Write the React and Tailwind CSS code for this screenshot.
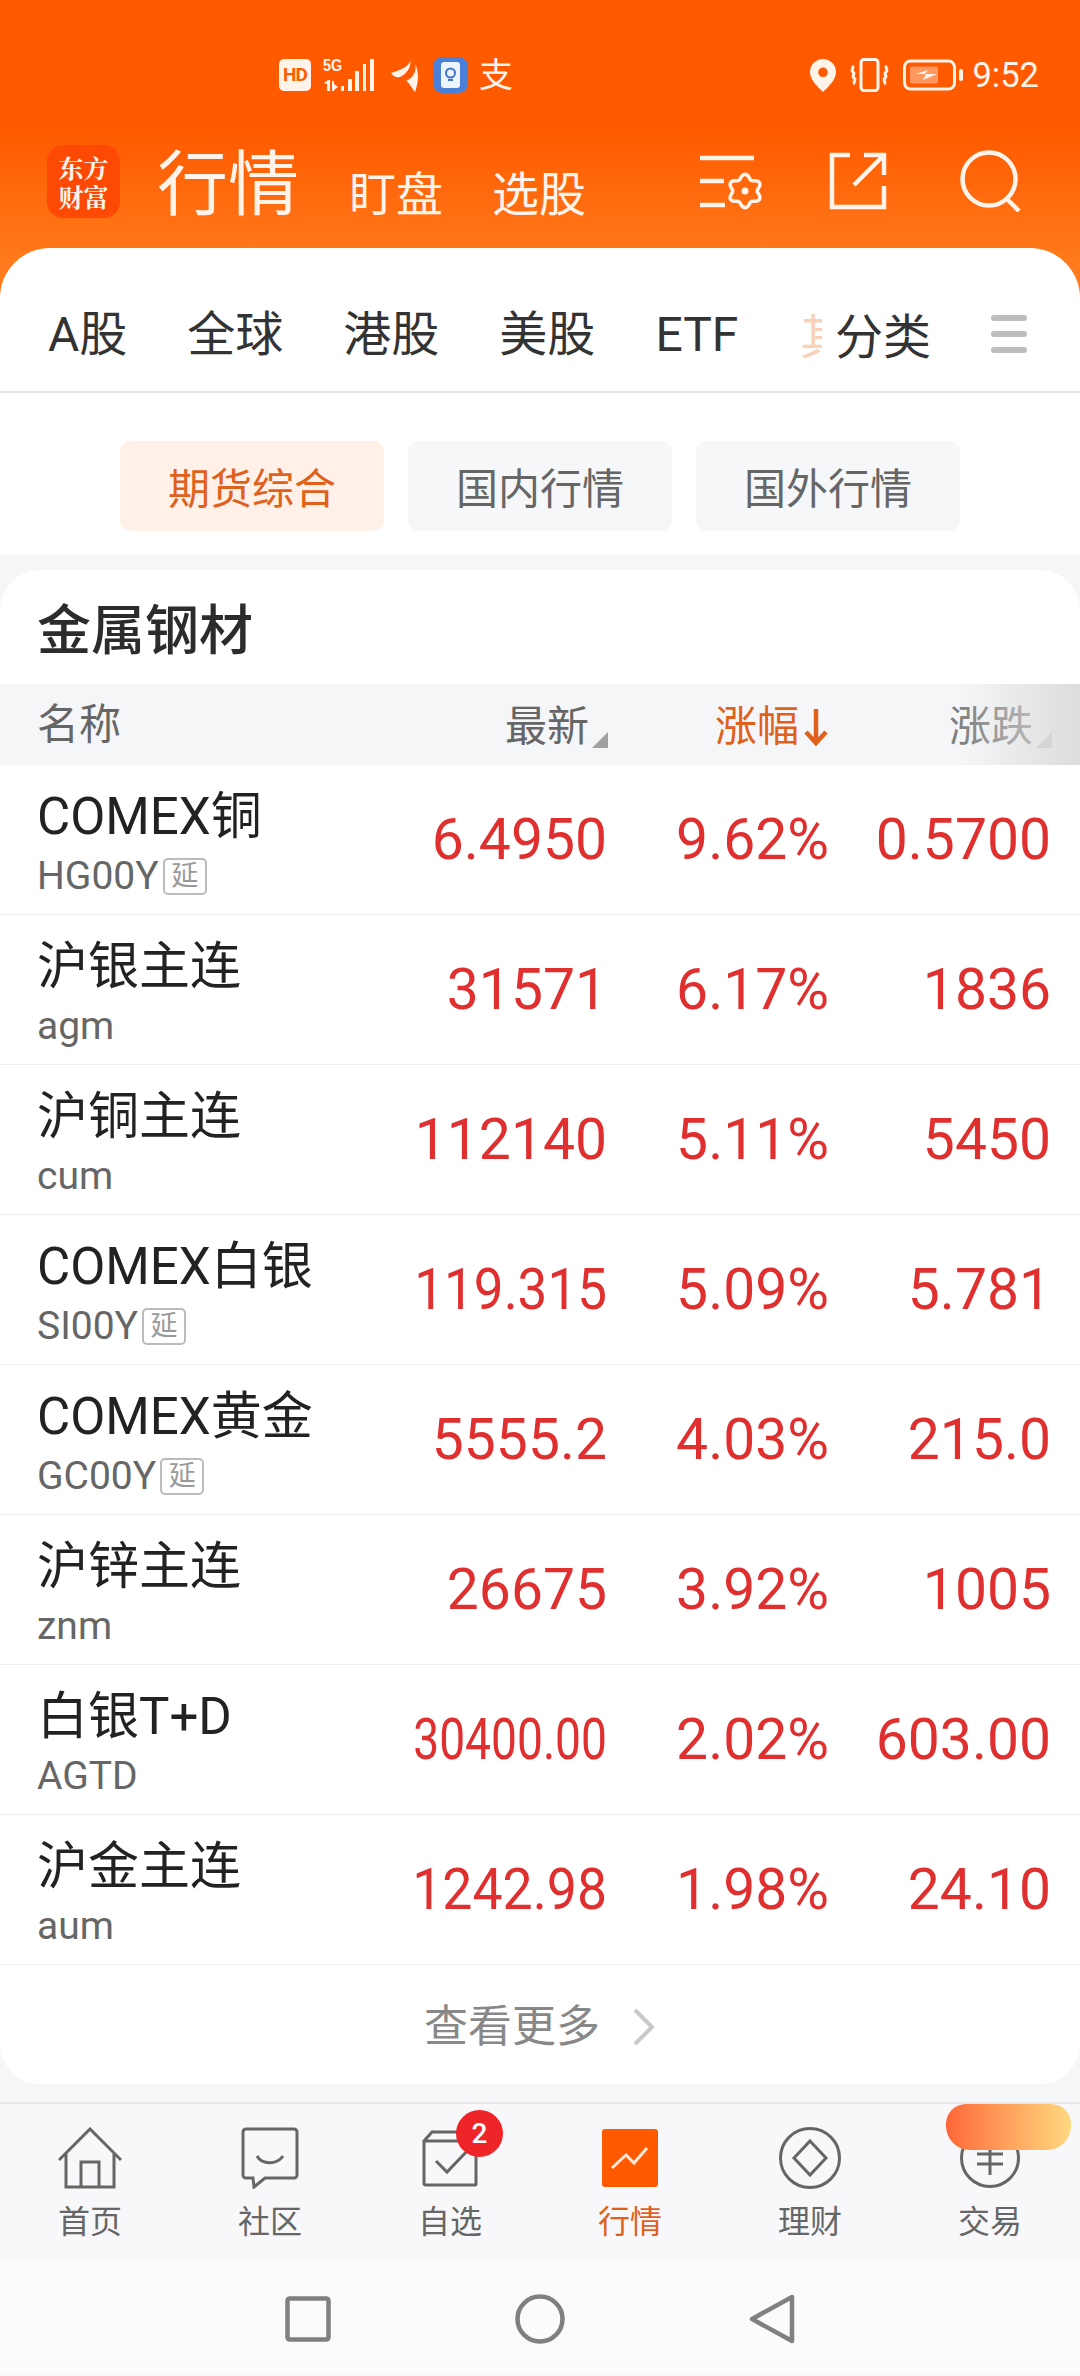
const FONT = "font-['Roboto','Noto_Sans_CJK_SC',sans-serif]";

const tabs = ['全球', '港股', '美股', 'ETF'];

const subTabs = [
  { label: '期货综合', active: true },
  { label: '国内行情' },
  { label: '国外行情' },
];

const rows = [
  { name: 'COMEX铜', code: 'HG00Y', delay: true, last: '6.4950', pct: '9.62%', chg: '0.5700' },
  { name: '沪银主连', code: 'agm', last: '31571', pct: '6.17%', chg: '1836' },
  { name: '沪铜主连', code: 'cum', last: '112140', pct: '5.11%', chg: '5450' },
  { name: 'COMEX白银', code: 'SI00Y', delay: true, last: '119.315', pct: '5.09%', chg: '5.781', fit: 'scale-x-[0.93] origin-right' },
  { name: 'COMEX黄金', code: 'GC00Y', delay: true, last: '5555.2', pct: '4.03%', chg: '215.0' },
  { name: '沪锌主连', code: 'znm', last: '26675', pct: '3.92%', chg: '1005' },
  { name: '白银T+D', code: 'AGTD', last: '30400.00', pct: '2.02%', chg: '603.00', fit: 'scale-x-[0.81] origin-right' },
  { name: '沪金主连', code: 'aum', last: '1242.98', pct: '1.98%', chg: '24.10', fit: 'scale-x-[0.94] origin-right' },
];

// six-lobed outline of the little gear in the title bar
const gearPath = Array.from({ length: 72 }, (_, i) => {
  const a = (i / 72) * Math.PI * 2;
  const r = 14.5 + 2.2 * Math.cos(6 * a);
  return `${i === 0 ? 'M' : 'L'}${(45 + r * Math.sin(a)).toFixed(1)} ${(39 - r * Math.cos(a)).toFixed(1)}`;
}).join('') + 'z';

function StatusBar() {
  return (
    <div className="h-[136px] pl-[279px] pr-[41px] pt-[57px] flex justify-between items-start text-[#fff3ea]">
      <div className="flex items-center h-[36px]">
        <div className="w-[32px] h-[32px] rounded-[5px] bg-[#fff3ea] text-[#ff5a00] text-[19px] leading-[32px] font-bold text-center tracking-[-1px]">HD</div>
        <div className="relative w-[54px] h-[34px] ml-[12px]">
          <span className="absolute left-0 top-0 text-[16px] leading-[15px] font-bold font-['Liberation_Sans',sans-serif] scale-x-[0.9] origin-left">5G</span>
          <svg width="54" height="34" viewBox="0 0 54 34" fill="currentColor" className="absolute left-0 top-0">
            <path d="M1 25l4-3h2v11H4v-7zM9 23h2v3l4 3-4 3v1H9zM18 28h3v5h-3zM25 21h4v12h-4zM32 13h4v20h-4zM40 6h3v27h-3zM47 1h4v32h-4z" />
          </svg>
        </div>
        <svg width="28" height="34" viewBox="0 0 28 34" fill="currentColor" className="ml-[14px]">
          <path d="M19 1c1 5-5 9-13 12l-6 2c2 3 5 5 9 4 6-3 12-9 10-18z" />
          <path d="M24 6c2 7-2 14-9 17 3 1 5 6 9 11 3-8 5-19 0-28z" />
        </svg>
        <div className="w-[35px] h-[36px] ml-[14px] rounded-[9px] bg-[#4a80d8] flex items-center justify-center">
          <div className="w-[19px] h-[26px] rounded-[3px] bg-[#eef4fd] flex items-center justify-center">
            <svg width="13" height="16" viewBox="0 0 13 16" fill="none" stroke="#3f74c8" strokeWidth="2">
              <circle cx="6.5" cy="6" r="4.5" />
              <path d="M4 13h5" />
            </svg>
          </div>
        </div>
        <span className="ml-[11px] text-[34px] leading-[36px]">支</span>
      </div>
      <div className="flex items-center h-[36px]">
        <svg width="26" height="33" viewBox="0 0 26 33" fill="currentColor">
          <path fillRule="evenodd" d="M13 0c7 0 13 5.500 13 13 0 8-8 15-13 20C8 28 0 21 0 13 0 5.500 6 0 13 0zm0 8.500a4.800 4.800 0 1 0 0 9.600 4.800 4.800 0 0 0 0-9.600z" />
        </svg>
        <svg width="42" height="34" viewBox="0 0 42 34" fill="none" stroke="currentColor" strokeWidth="3" className="ml-[13px]">
          <rect x="12" y="1.500" width="17" height="31" rx="3" />
          <path d="M3 8c3 2-2 4 1 6s-2 4 1 6-2 4 1 6M38 8c-3 2 2 4-1 6s2 4-1 6 2 4-1 6" />
        </svg>
        <svg width="60" height="32" viewBox="0 0 60 32" fill="none" className="ml-[12px]">
          <rect x="1.500" y="2" width="50" height="28" rx="6" stroke="currentColor" strokeWidth="3" />
          <rect x="7" y="7.500" width="28" height="17" rx="2" fill="currentColor" opacity="0.400" />
          <path d="M12 15l13-4-3 4h12l-14 6 3-6z" fill="currentColor" />
          <rect x="56" y="10" width="4" height="12" rx="2" fill="currentColor" />
        </svg>
        <span className="ml-[9px] text-[34.500px] leading-[36px]">9:52</span>
      </div>
    </div>
  );
}

function TitleBar() {
  return (
    <div className="h-[112px] pl-[47px] pr-[58px] flex items-start text-[#fff3ea]">
      <div className="w-[73px] h-[73px] mt-[9px] rounded-[16px] bg-[#fc4a04] flex flex-col items-center justify-center font-['Noto_Serif_CJK_SC','Noto_Sans_CJK_SC',serif] font-bold text-[25px] leading-[29px]">
        <span>东方</span>
        <span>财富</span>
      </div>
      <span className="ml-[37px] mt-[3px] text-[71px] leading-[92px]">行情</span>
      <span className="ml-[50px] mt-[19px] text-[47px] leading-[80px]">盯盘</span>
      <span className="ml-[49px] mt-[19px] text-[47px] leading-[80px]">选股</span>
      <div className="ml-auto mt-[16px] flex items-start">
        <svg width="64" height="58" viewBox="0 0 64 58" fill="none" stroke="currentColor" strokeWidth="4.500">
          <path d="M0 6h54M0 29h24M0 53h25" />
          <path d={gearPath} strokeWidth="3.500" />
          <circle cx="45" cy="39" r="3.500" fill="currentColor" stroke="none" />
        </svg>
        <svg width="58" height="58" viewBox="0 0 58 58" fill="none" stroke="currentColor" strokeWidth="4.500" className="ml-[65px]">
          <path d="M21 3H3v52h52V34M35 3h20v20M55 3L25 33" />
        </svg>
        <svg width="62" height="62" viewBox="0 0 62 62" fill="none" stroke="currentColor" strokeWidth="4.500" className="ml-[73px] -mt-[2px]">
          <circle cx="29" cy="29" r="26.500" />
          <path d="M47 49l12 12" />
        </svg>
      </div>
    </div>
  );
}

function TabStrip() {
  return (
    <div className="h-[145px] pt-[30px] border-b-[2px] border-[#e6e6e6] flex items-center text-[48px] text-[#333] relative">
      <span className="ml-[48px]">A股</span>
      {tabs.map(t => (
        <span key={t} className="ml-[60px]">{t}</span>
      ))}
      <div className="absolute left-[800px] top-[54px] w-[22px] h-[64px] overflow-hidden text-[#f8c8a8] opacity-80">其</div>
      <span className="absolute left-[835px] top-[54px]">分类</span>
      <div className="absolute left-[991px] top-[67px] flex flex-col gap-[10px]">
        <div className="w-[36px] h-[6px] rounded-full bg-[#bdbdbd]"></div>
        <div className="w-[36px] h-[6px] rounded-full bg-[#bdbdbd]"></div>
        <div className="w-[36px] h-[6px] rounded-full bg-[#bdbdbd]"></div>
      </div>
    </div>
  );
}

function SubTabs() {
  return (
    <div className="h-[162px] pl-[120px] pt-[48px] flex gap-[24px] bg-white">
      {subTabs.map(s => (
        <div
          key={s.label}
          className={`w-[264px] h-[90px] pt-[7px] rounded-[10px] flex items-center justify-center text-[42px] ${s.active ? 'bg-[#fff0e8] text-[#e0611c]' : 'bg-[#f6f7f9] text-[#666]'}`}
        >
          {s.label}
        </div>
      ))}
    </div>
  );
}

function Corner({ color }) {
  return (
    <svg width="16" height="16" viewBox="0 0 16 16" className="self-end mb-[2px] ml-[3px]">
      <path d="M16 0v16H0z" fill={color} />
    </svg>
  );
}

function TableHead() {
  return (
    <div className="relative h-[81px] bg-[#f5f6f8] flex items-center pl-[37px] pr-[28px] text-[42px] text-[#666]">
      <span className="flex-1 -mt-[1px]">名称</span>
      <div className="w-[300px] flex justify-end h-[50px] items-center pt-[4px]">
        <span>最新</span>
        <Corner color="#a0a0a0" />
      </div>
      <div className="w-[224px] flex justify-end h-[50px] items-center text-[#e0611c] pr-[1px] pt-[4px]">
        <span>涨幅</span>
        <svg width="30" height="38" viewBox="0 0 30 38" fill="none" stroke="#e0611c" strokeWidth="4.500" className="ml-[2px]">
          <path d="M15 1v34M5 24l10 11 10-11" />
        </svg>
      </div>
      <div className="w-[220px] flex justify-end h-[50px] items-center pt-[4px]">
        <span className="text-[#808080]">涨跌</span>
        <Corner color="#c4c4c4" />
      </div>
      <div className="absolute right-0 top-0 w-[120px] h-full bg-gradient-to-r from-[#f5f6f8]/0 to-[#dcdcdc]"></div>
    </div>
  );
}

function Row({ row }) {
  return (
    <div className="h-[150px] border-b-[1px] border-[#eeeeee] flex items-center pl-[37px] pr-[29px] text-[#e02f2f]">
      <div className="flex-1 w-0 whitespace-nowrap pt-[6px]">
        <div className="text-[51px] leading-[60px] text-[#222]">{row.name}</div>
        <div className="flex items-center mt-[8px] h-[44px] text-[39px] text-[#666]">
          <span>{row.code}</span>
          {row.delay && (
            <span className="ml-[4px] w-[44px] h-[37px] border-[2px] border-[#bbb] rounded-[5px] text-[27px] leading-[32px] text-center text-[#999]">延</span>
          )}
        </div>
      </div>
      <div className={`w-[300px] text-right text-[57px] whitespace-nowrap ${row.fit || ''}`}>{row.last}</div>
      <div className="w-[222px] text-right text-[57px]">{row.pct}</div>
      <div className="w-[222px] text-right text-[57px]">{row.chg}</div>
    </div>
  );
}

function NavIcon({ name }) {
  const props = { fill: 'none', stroke: '#666', strokeWidth: 3 };
  if (name === 'home') {
    return (
      <svg width="64" height="62" viewBox="0 0 64 62" {...props}>
        <path d="M1 33L32 2l31 31M8 27v33h48V27M23 60V35h18v25" />
      </svg>
    );
  }
  if (name === 'chat') {
    return (
      <svg width="58" height="62" viewBox="0 0 58 62" {...props}>
        <path d="M5 2h48a3 3 0 0 1 3 3v43a3 3 0 0 1-3 3H24l-11 9-1-9H5a3 3 0 0 1-3-3V5a3 3 0 0 1 3-3z" />
        <path d="M16 29c5 9 20 9 26 0" />
      </svg>
    );
  }
  if (name === 'check') {
    return (
      <svg width="56" height="58" viewBox="0 0 56 58" {...props}>
        <path d="M2 12l8-9h44v52a1 1 0 0 1-1 1H4a2 2 0 0 1-2-2zM2 12h52M14 32l11 11 22-23" />
      </svg>
    );
  }
  if (name === 'chart') {
    return (
      <div className="w-[56px] h-[58px] rounded-[3px] bg-[#ff5a00] flex items-center justify-center">
        <svg width="38" height="24" viewBox="0 0 38 24" fill="none" stroke="#ffe8d8" strokeWidth="3">
          <path d="M1 22l14-13 8 8L36 2" />
        </svg>
      </div>
    );
  }
  if (name === 'diamond') {
    return (
      <svg width="62" height="64" viewBox="0 0 62 64" {...props}>
        <circle cx="31" cy="32" r="29.500" />
        <path d="M31 15l16 17-16 17-16-17z" />
      </svg>
    );
  }
  return (
    <svg width="60" height="60" viewBox="0 0 60 60" {...props}>
      <circle cx="30" cy="30" r="28.500" />
      <path d="M17 26h26M17 36h26M30 22v25" />
    </svg>
  );
}

function BottomNav() {
  const items = [
    { icon: 'home', label: '首页' },
    { icon: 'chat', label: '社区' },
    { icon: 'check', label: '自选', badge: '2' },
    { icon: 'chart', label: '行情', active: true },
    { icon: 'diamond', label: '理财' },
    { icon: 'yen', label: '交易' },
  ];
  return (
    <div className="relative h-[157px] bg-[#f8f8fa] border-t-[2px] border-[#e6e6e8] grid grid-cols-6">
      {items.map(item => (
        <div key={item.label} className="relative flex flex-col items-center">
          <div className="h-[64px] mt-[22px] flex items-center justify-center">
            <NavIcon name={item.icon} />
          </div>
          <span className={`mt-[11px] text-[32px] leading-[42px] ${item.active ? 'text-[#e0611c]' : 'text-[#666]'}`}>{item.label}</span>
          {item.badge && (
            <div className="absolute left-[96px] top-[6px] w-[47px] h-[47px] rounded-full bg-[#ee2528] text-white text-[28px] leading-[47px] text-center font-medium">{item.badge}</div>
          )}
        </div>
      ))}
      <div className="absolute left-[946px] top-0 w-[125px] h-[46px] rounded-b-[24px] rounded-t-[20px] bg-gradient-to-r from-[#ff6638] to-[#ffd880]"></div>
    </div>
  );
}

function SystemNav() {
  return (
    <div className="h-[116px] bg-[#fbfbfb] flex items-start justify-center pt-[35px] gap-[184px]">
      <svg width="46" height="46" viewBox="0 0 46 46" fill="none" stroke="#808080" strokeWidth="4.500" className="mt-[2px]">
        <rect x="2.500" y="2.500" width="41" height="41" rx="2" />
      </svg>
      <svg width="50" height="50" viewBox="0 0 50 50" fill="none" stroke="#808080" strokeWidth="4.500">
        <circle cx="25" cy="25" r="22.500" />
      </svg>
      <svg width="46" height="50" viewBox="0 0 46 50" fill="none" stroke="#808080" strokeWidth="4.500" strokeLinejoin="round">
        <path d="M43 3v44L3 25z" />
      </svg>
    </div>
  );
}

export default function App() {
  return (
    <div className={`w-[1080px] h-[2376px] overflow-hidden bg-[#f5f6f8] ${FONT}`}>
      <div className="bg-[linear-gradient(180deg,#ff5a00_0,#ff5a00_130px,#ff7a1c_260px,#ff7a1c_100%)]">
        <StatusBar />
        <TitleBar />
        <div className="bg-white rounded-t-[50px]">
          <TabStrip />
          <SubTabs />
        </div>
      </div>

      <div className="mt-[15px] bg-white rounded-[40px] overflow-hidden">
        <div className="h-[114px] pl-[37px] pt-[27px] text-[54px] leading-[70px] font-medium text-[#2c2c2c]">金属钢材</div>
        <TableHead />
        {rows.map(row => <Row key={row.code} row={row} />)}
        <div className="h-[119px] pt-[5px] flex items-center justify-center text-[44px] text-[#888]">
          <span>查看更多</span>
          <svg width="24" height="38" viewBox="0 0 24 38" fill="none" stroke="#c8c8c8" strokeWidth="4" className="ml-[32px]">
            <path d="M3 2l17 17L3 36" />
          </svg>
        </div>
      </div>

      <div className="h-[18px]"></div>
      <BottomNav />
      <SystemNav />
    </div>
  );
}
